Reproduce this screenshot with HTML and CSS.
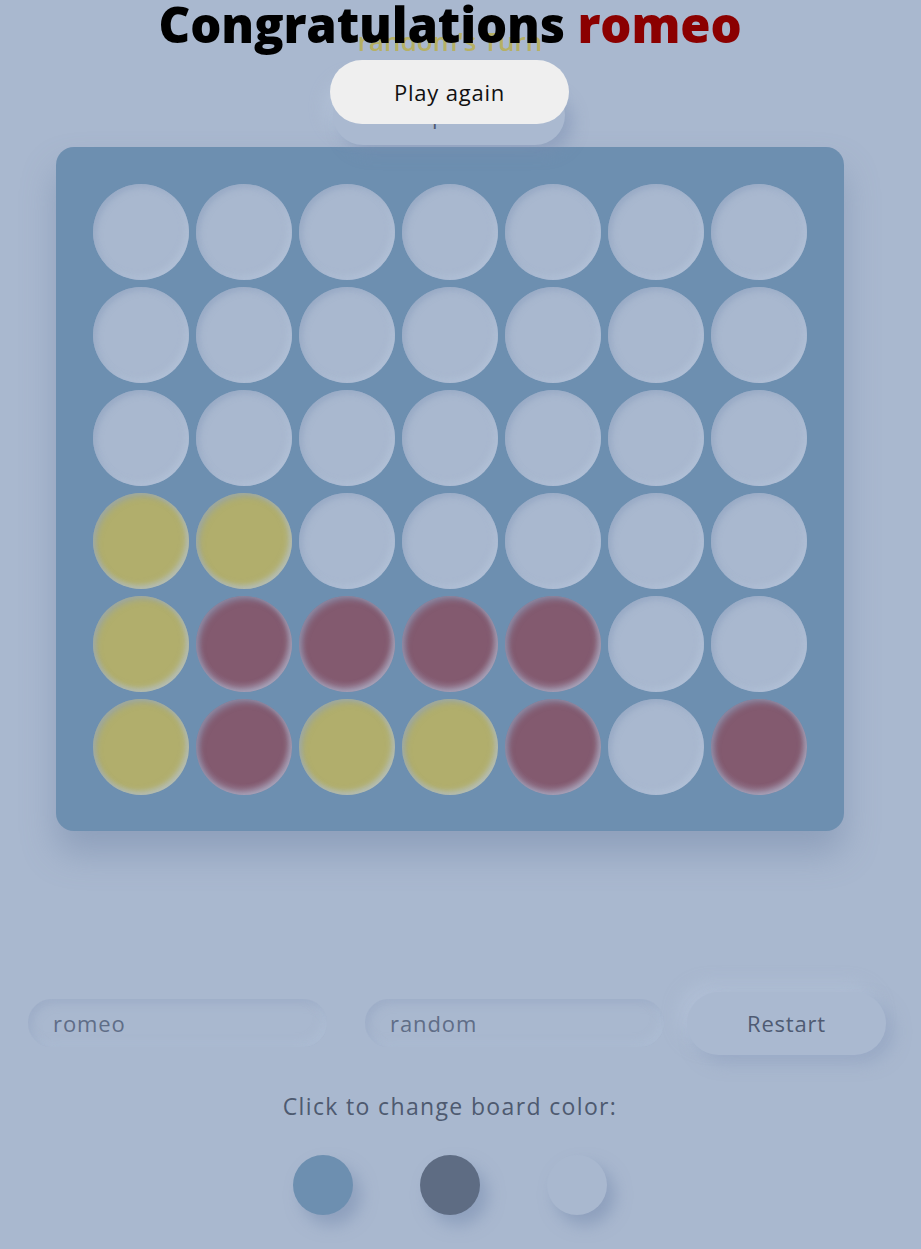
FILE: index.html
```html
<!DOCTYPE html>
<html lang="en">
<head>
<meta charset="utf-8">
<title>Connect Four</title>
<link rel="stylesheet" href="styles.css">
</head>
<body>
<div class="page">
  <header class="top">
    <h2 class="turn">random's Turn</h2>
    <button class="ghost-btn">Skip turn</button>
    <div class="win">
      <h1 class="win-title">Congratulations <span class="winner">romeo</span></h1>
      <button class="play-again">Play again</button>
    </div>
  </header>

  <main class="board">
    <div class="cell"></div><div class="cell"></div><div class="cell"></div><div class="cell"></div><div class="cell"></div><div class="cell"></div><div class="cell"></div>
    <div class="cell"></div><div class="cell"></div><div class="cell"></div><div class="cell"></div><div class="cell"></div><div class="cell"></div><div class="cell"></div>
    <div class="cell"></div><div class="cell"></div><div class="cell"></div><div class="cell"></div><div class="cell"></div><div class="cell"></div><div class="cell"></div>
    <div class="cell y"></div><div class="cell y"></div><div class="cell"></div><div class="cell"></div><div class="cell"></div><div class="cell"></div><div class="cell"></div>
    <div class="cell y"></div><div class="cell r"></div><div class="cell r"></div><div class="cell r"></div><div class="cell r"></div><div class="cell"></div><div class="cell"></div>
    <div class="cell y"></div><div class="cell r"></div><div class="cell y"></div><div class="cell y"></div><div class="cell r"></div><div class="cell"></div><div class="cell r"></div>
  </main>

  <section class="controls">
    <input class="name-input" type="text" value="romeo">
    <input class="name-input second" type="text" value="random">
    <button class="restart">Restart</button>
  </section>

  <section class="colors">
    <p class="colors-label">Click to change board color:</p>
    <div class="swatches">
      <div class="swatch s1"></div>
      <div class="swatch s2"></div>
      <div class="swatch s3"></div>
    </div>
  </section>
</div>
</body>
</html>
```

FILE: styles.css
```css
* { box-sizing: border-box; }
html, body {
  margin: 0;
  padding: 0;
  background: #a9b8cf;
  font-family: "Open Sans", "Liberation Sans", sans-serif;
  overflow: hidden;
}
.page {
  width: 900px;
  height: 1249px;
}
.top {
  position: relative;
  height: 147px;
}
.turn {
  margin: 0;
  padding-top: 24px;
  text-align: center;
  font-size: 26px;
  font-weight: 600;
  color: #b6b064;
  line-height: 34px;
}
.ghost-btn {
  position: absolute;
  left: 333px;
  top: 85px;
  width: 232px;
  height: 60px;
  border: none;
  border-radius: 30px;
  background: #aab9d0;
  box-shadow: 8px 8px 16px rgba(120, 140, 175, 0.45), -8px -8px 16px rgba(190, 204, 225, 0.4);
  color: #4f5b73;
  font-family: inherit;
  font-size: 22px;
}
.win {
  position: absolute;
  left: 0;
  top: 0;
  width: 900px;
  display: flex;
  flex-direction: column;
  align-items: center;
}
.win-title {
  margin: -2px 0 0;
  font-size: 49px;
  font-weight: 800;
  line-height: 52px;
  color: #000;
  letter-spacing: -0.15px;
}
.winner { color: #8b0000; }
.play-again {
  margin-top: 10px;
  margin-left: -1px;
  width: 239px;
  height: 64px;
  border: none;
  border-radius: 32px;
  background: #efefef;
  color: #111;
  font-family: inherit;
  font-size: 22px;
  letter-spacing: 0.8px;
}
.board {
  margin: 0 auto;
  width: 788px;
  height: 684px;
  padding: 37px 37px 36px;
  background: #6d8fb0;
  border-radius: 18px;
  box-shadow: 0 22px 34px rgba(110, 130, 165, 0.45);
  display: grid;
  grid-template-columns: repeat(7, 96px);
  grid-auto-rows: 96px;
  gap: 7px;
}
.cell {
  border-radius: 50%;
  background: #a9b8cf;
  box-shadow: inset 3px 3px 6px rgba(140, 160, 190, 0.6), inset -3px -3px 6px rgba(185, 200, 222, 0.6);
}
.cell.y {
  background: radial-gradient(circle at 50% 48%, #b1ae6c 0%, #b1ae6c 62%, #b2b58f 78%, #b2c0d2 100%);
}
.cell.r {
  background: radial-gradient(circle at 50% 45%, #835a6f 0%, #835a6f 58%, #93768e 75%, #b2bdd6 100%);
}
.controls {
  margin-top: 160px;
  display: flex;
  align-items: center;
  padding-left: 28px;
  height: 64px;
}
.name-input {
  width: 299px;
  height: 48px;
  border: none;
  outline: none;
  border-radius: 24px;
  background: #a9b8cf;
  box-shadow: inset 4px 4px 8px rgba(150, 166, 195, 0.55), inset -4px -4px 8px rgba(180, 195, 218, 0.5);
  padding: 0 25px;
  font-family: inherit;
  font-size: 22px;
  letter-spacing: 0.9px;
  color: #5f6d87;
}
.name-input.second { margin-left: 38px; }
.restart {
  margin-left: 23px;
  width: 199px;
  height: 63px;
  border: none;
  border-radius: 32px;
  background: #aab9d0;
  box-shadow: 8px 8px 16px rgba(140, 158, 190, 0.5), -8px -8px 16px rgba(185, 200, 222, 0.5);
  font-family: inherit;
  font-size: 22px;
  letter-spacing: 0.8px;
  color: #4f5b73;
}
.colors {
  display: flex;
  flex-direction: column;
  align-items: center;
}
.colors-label {
  margin: 35px 0 0;
  font-size: 23px;
  letter-spacing: 1.35px;
  line-height: 32px;
  color: #4e5a70;
}
.swatches {
  margin-top: 33px;
  display: flex;
  gap: 67px;
}
.swatch {
  width: 60px;
  height: 60px;
  border-radius: 50%;
  box-shadow: 8px 10px 16px rgba(120, 140, 175, 0.55);
}
.s1 { background: #6d8fb0; }
.s2 { background: #5e6c83; }
.s3 { background: #a9b8cf; }
```
